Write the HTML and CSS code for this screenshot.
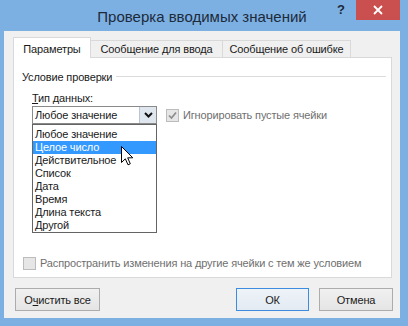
FILE: index.html
```html
<!DOCTYPE html>
<html lang="ru">
<head>
<meta charset="utf-8">
<title>Проверка вводимых значений</title>
<link rel="stylesheet" href="styles.css">
</head>
<body>
<div class="window">
  <div class="titlebar">
    <div class="title-spacer"></div>
    <div class="title">Проверка вводимых значений</div>
    <div class="controls">
      <span class="help">?</span>
      <span class="close"><svg width="10" height="10" viewBox="0 0 10 10"><path d="M1 1 L9 9 M9 1 L1 9" stroke="#fff" stroke-width="1.8" fill="none"/></svg></span>
    </div>
  </div>
  <div class="client">
    <div class="tabs">
      <div class="tab tab-active">Параметры</div>
      <div class="tab tab-input">Сообщение для ввода</div>
      <div class="tab tab-error">Сообщение об ошибке</div>
    </div>
    <div class="panel">
      <div class="group-title"><span>Условие проверки</span><span class="rule"></span></div>
      <div class="group-body">
        <div class="field-label"><u>Т</u>ип данных:</div>
        <div class="field-row">
          <div class="combo-wrap">
            <div class="combo">
              <span class="combo-text">Любое значение</span>
              <span class="combo-btn"><svg width="9" height="6" viewBox="0 0 9 6"><path d="M1 1 L4.5 4.5 L8 1" stroke="#111" stroke-width="2" fill="none"/></svg></span>
            </div>
            <ul class="list">
              <li>Любое значение</li>
              <li class="selected">Целое число</li>
              <li>Действительное</li>
              <li>Список</li>
              <li>Дата</li>
              <li>Время</li>
              <li>Длина текста</li>
              <li>Другой</li>
            </ul>
            <svg class="cursor" width="13" height="20" viewBox="0 0 13 20"><path d="M0.5 0.5 L0.5 16.5 L4.3 12.8 L7 18.8 L9.3 17.8 L6.7 11.8 L11.8 11.8 Z" fill="#fff" stroke="#000" stroke-width="1" stroke-linejoin="miter"/></svg>
          </div>
          <div class="check disabled">
            <span class="box"><svg width="11" height="11" viewBox="0 0 11 11"><path d="M2 5.5 L4.5 8 L9 2.5" stroke="#8c8c8c" stroke-width="1.7" fill="none"/></svg></span>
            <span>Игнорировать пустые ячейки</span>
          </div>
        </div>
      </div>
      <div class="check disabled bottom-check">
        <span class="box"></span>
        <span>Распространить изменения на другие ячейки с тем же условием</span>
      </div>
    </div>
    <div class="buttons">
      <button class="btn btn-clear">О<u>ч</u>истить все</button>
      <span class="spacer"></span>
      <button class="btn btn-ok">ОК</button>
      <button class="btn btn-cancel">Отмена</button>
    </div>
  </div>
</div>
</body>
</html>
```
FILE: styles.css
```css
* { box-sizing: border-box; margin: 0; padding: 0; }
html, body { width: 408px; height: 326px; overflow: hidden; }
body {
  font-family: "Liberation Sans", Arial, sans-serif;
  font-size: 11px;
  letter-spacing: -0.15px;
  color: #1a1a1a;
  background: #7cb0e3;
}
.window {
  width: 408px;
  height: 326px;
  background: #7cb0e3;
  padding: 0 8px 8px 4px;
  display: flex;
  flex-direction: column;
}
.titlebar {
  height: 31px;
  display: grid;
  grid-template-columns: 1fr auto 1fr;
}
.title {
  font-size: 15px;
  letter-spacing: 0;
  color: #1c2a3a;
  padding-top: 2px;
  line-height: 29px;
}
.controls {
  justify-self: end;
  display: flex;
  align-items: flex-start;
}
.help {
  font-size: 13px;
  font-weight: bold;
  letter-spacing: 0;
  line-height: 20px;
  color: #1c2a3a;
  margin-right: 11px;
}
.close {
  width: 44px;
  height: 20px;
  background: #c9504f;
  display: grid;
  place-items: center;
}
.close svg { display: block; }

.client {
  flex: 1;
  background: #f0f0f0;
  padding: 6px 8px 7px 9px;
  display: flex;
  flex-direction: column;
}
.tabs {
  display: flex;
  align-items: flex-end;
  height: 21px;
  margin-bottom: -1px;
  position: relative;
  z-index: 1;
}
.tab {
  height: 17px;
  margin-bottom: 1px;
  margin-left: -1px;
  border: 1px solid #d9d9d9;
  border-bottom: none;
  background: #f0f0f0;
  line-height: 13px;
  padding-bottom: 1px;
  display: flex;
  align-items: flex-end;
  justify-content: center;
}
.tab-active {
  width: 78px;
  height: 21px;
  margin-bottom: 0;
  margin-left: 0;
  padding-bottom: 2px;
  background: #fff;
  position: relative;
  z-index: 1;
}
.tab-input { width: 133px; }
.tab-error { width: 129px; }

.panel {
  height: 221px;
  background: #fff;
  border: 1px solid #d9d9d9;
  display: flex;
  flex-direction: column;
}
.group-title {
  display: flex;
  align-items: center;
  margin: 12px 5px 0 8px;
  line-height: 14px;
}
.rule {
  flex: 1;
  height: 1px;
  background: #dcdcdc;
  margin-left: 4px;
  margin-top: -1px;
}
.group-body {
  margin-left: 18px;
}
.field-label {
  margin-top: 7px;
  line-height: 14px;
}
.field-label u, .btn u { text-decoration-thickness: 1px; text-underline-offset: 1px; }
.field-row {
  margin-top: 1px;
  display: flex;
  align-items: flex-start;
}
.combo-wrap {
  position: relative;
  width: 125px;
}
.combo {
  height: 18px;
  border: 1px solid #8a8a8a;
  background: #fff;
  display: flex;
}
.combo-text {
  flex: 1;
  padding-left: 2px;
  line-height: 16px;
}
.combo-btn {
  width: 17px;
  background: #dfe6ee;
  border-left: 1px solid #b9c5d2;
  display: grid;
  place-items: center;
}
.combo-btn svg { display: block; }
.list {
  position: absolute;
  top: 100%;
  left: 0;
  width: 125px;
  border: 1px solid #646464;
  background: #fff;
  padding-top: 3px;
  list-style: none;
  z-index: 2;
}
.list li {
  height: 13px;
  line-height: 13px;
  padding-left: 2px;
  white-space: nowrap;
}
.list li.selected {
  background: #3399ff;
  color: #fff;
}
.cursor {
  position: absolute;
  left: 89px;
  top: 40px;
  z-index: 3;
}
.check {
  display: flex;
  align-items: center;
  height: 14px;
  gap: 4px;
}
.disabled { color: #6f6f6f; }
.box {
  width: 13px;
  height: 13px;
  border: 1px solid #bcbcbc;
  background: #e6e6e6;
  display: grid;
  place-items: center;
}
.box svg { display: block; }
.field-row .check {
  margin-left: 9px;
  margin-top: 2px;
}
.bottom-check {
  margin-top: auto;
  margin-left: 9px;
  margin-bottom: 7px;
}

.buttons {
  margin-top: 10px;
  margin-left: 2px;
  margin-right: -1px;
  display: flex;
}
.spacer { flex: 1; }
.btn {
  height: 23px;
  border: 1px solid #acacac;
  background: linear-gradient(#f0f0f0, #e5e5e5);
  font: inherit;
  letter-spacing: inherit;
  color: #1a1a1a;
}
.btn-clear { width: 85px; }
.btn-ok { width: 73px; border-color: #3c8ce0; background: linear-gradient(#eef3f8, #e3eaf2); }
.btn-cancel { width: 74px; margin-left: 10px; }
```
